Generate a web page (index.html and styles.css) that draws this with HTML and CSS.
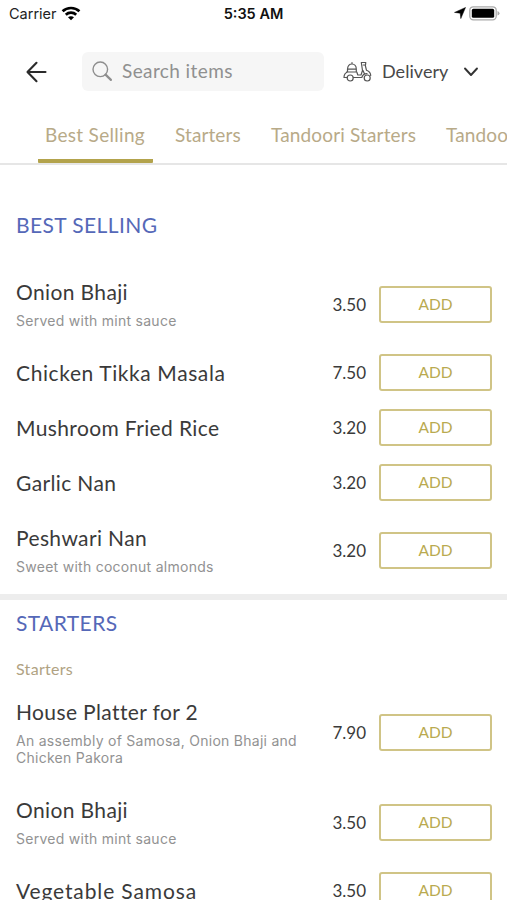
FILE: index.html
```html
<!DOCTYPE html>
<html lang="en">
<head>
<meta charset="utf-8">
<title>Menu</title>
<link rel="stylesheet" href="styles.css">
</head>
<body>
<div class="status">
  <div class="status-left"><span class="carrier">Carrier</span>
    <svg width="20" height="15" viewBox="0 0 20 15" fill="none" stroke="#000" stroke-width="2.7"><path d="M1.6 5.3C6.2.9 13.8.9 18.4 5.3"/><path d="M4.8 8.7C7.7 6 12.3 6 15.2 8.7"/><path d="M10 14.3 7 11.3C8.6 9.8 11.4 9.8 13 11.3Z" fill="#000" stroke="none"/></svg>
  </div>
  <span class="time">5:35 AM</span>
  <div class="status-right">
    <svg width="12" height="12" viewBox="0 0 12 12"><path d="M11.5.5 6.800 11.600 6.200 6.200.5 5.400Z" fill="#000" stroke="#000" stroke-width=".5" stroke-linejoin="round"/></svg>
    <svg width="31" height="15" viewBox="0 0 31 15"><rect x=".8" y=".8" width="26.4" height="13" rx="3.5" fill="#fff" stroke="#aaa" stroke-width="1.3"/><rect x="2.8" y="2.8" width="22.4" height="9" rx="1.6"/><path d="M28.5 5v4.600q2-.7 2-2.300t-2-2.300" fill="#aaa"/></svg>
  </div>
</div>
<header class="header">
  <svg class="back" width="22" height="22" viewBox="0 0 22 22" fill="none" stroke="#2b2b2b" stroke-width="2.1" stroke-linecap="round" stroke-linejoin="round"><path d="M19.500 11H1.800M10.500 1.800 1.500 11l9 9.200"/></svg>
  <div class="search">
    <svg width="21" height="21" viewBox="0 0 21 21" fill="none" stroke="#8e8e8e" stroke-width="1.4"><circle cx="8.300" cy="8.300" r="7.300"/><path d="m13.600 13.600 5.300 5.300" stroke-width="2.200" stroke-linecap="round"/></svg>
    <span>Search items</span>
  </div>
  <div class="mode">
    <svg width="29" height="21" viewBox="0 0 29 21" fill="none" stroke="#555" stroke-width="1.2" stroke-linejoin="round" stroke-linecap="round"><path d="M4.500 8.200C4.700 4.800 6.500 3 9 3s4.300 1.800 4.300 5.200ZM9 3V1.600M4.500 8.200V11M13.300 8.200V11M3.500 11h10.300M4.500 11C2 12 1 14 1 16.500H4M10.400 16.500h8.400c.7-2.500 2.700-3.800 5.200-3.800M13.800 11l1 3h3.200l1.500-4.500-1.200-8h4.500l-.3 2.500h-2.200M22.200 4l1.300 5.300c2.600 1 4.200 3 4.200 5.200M20 9.500l1.500 3.500"/><circle cx="7.200" cy="17" r="3"/><circle cx="24.200" cy="17" r="3"/></svg>
    <span class="mode-label">Delivery</span>
    <svg class="chevron" width="16" height="10" viewBox="0 0 16 10" fill="none" stroke="#333" stroke-width="1.9" stroke-linecap="round" stroke-linejoin="round"><path d="m2 1.500 6 6.500 6-6.500"/></svg>
  </div>
</header>
<nav class="tabs">
  <a class="tab active"><span class="t1">Best Selling</span></a><a class="tab"><span class="t2">Starters</span></a><a class="tab"><span class="t3">Tandoori Starters</span></a><a class="tab"><span class="t3">Tandoori Mains</span></a>
</nav>
<main>
  <section class="best">
    <h2>BEST SELLING</h2>
    <div class="row"><div class="info"><h3>Onion Bhaji</h3><p>Served with mint sauce</p></div><span class="price">3.50</span><button>ADD</button></div>
    <div class="row"><div class="info"><h3 class="wide">Chicken Tikka Masala</h3></div><span class="price">7.50</span><button>ADD</button></div>
    <div class="row"><div class="info"><h3>Mushroom Fried Rice</h3></div><span class="price">3.20</span><button>ADD</button></div>
    <div class="row"><div class="info"><h3>Garlic Nan</h3></div><span class="price">3.20</span><button>ADD</button></div>
    <div class="row"><div class="info"><h3>Peshwari Nan</h3><p>Sweet with coconut almonds</p></div><span class="price">3.20</span><button>ADD</button></div>
  </section>
  <section class="starters">
    <h2>STARTERS</h2>
    <h4>Starters</h4>
    <div class="row"><div class="info"><h3>House Platter for 2</h3><p>An assembly of Samosa, Onion Bhaji and Chicken Pakora</p></div><span class="price">7.90</span><button>ADD</button></div>
    <div class="row"><div class="info"><h3>Onion Bhaji</h3><p>Served with mint sauce</p></div><span class="price">3.50</span><button>ADD</button></div>
    <div class="row"><div class="info"><h3 class="widest">Vegetable Samosa</h3></div><span class="price">3.50</span><button>ADD</button></div>
  </section>
</main>
</body>
</html>
```
FILE: styles.css
```css
* { box-sizing: border-box; margin: 0; padding: 0; }
html, body { height: 900px; overflow: hidden; }
body { width: 507px; background: #fff; color: #3a3a3a; font-family: Lato, sans-serif; }
svg { display: block; flex: none; }

.status { display: grid; grid-template-columns: 1fr auto 1fr; align-items: center; height: 28px; padding: 0 7px 0 9px; font: 14.5px/28px Inter, sans-serif; color: #222; }
.status-left { display: flex; align-items: center; gap: 4px; }
.status-left svg { margin-top: -2px; }
.status-right { display: flex; align-items: center; justify-content: flex-end; gap: 3px; margin-top: -2px; }
.time { margin-left: -2px; font-weight: 600; color: #111; }

.header { display: flex; align-items: center; height: 87px; padding-left: 26px; }
.search { display: flex; align-items: center; gap: 9px; width: 242px; height: 39px; margin-left: 34px; padding: 0 0 1px 10px; border-radius: 6px; background: #f6f6f6; color: #909090; font-size: 19px; letter-spacing: .4px; }
.search span { margin-top: -1px; }
.mode { display: flex; align-items: center; margin-left: 19px; font-size: 18px; color: #484848; }
.mode-label { width: 66px; margin: -2px 0 0 10px; letter-spacing: .05px; white-space: nowrap; }
.chevron { margin-left: 15px; }

.tabs { display: flex; height: 50px; padding-left: 38px; border-bottom: 2px solid #e6e6e6; overflow: hidden; white-space: nowrap; color: #b8aa88; font-size: 19px; line-height: 40px; }
.tab { flex: none; padding: 0 7px; margin-right: 16px; height: 48px; }
.active { margin-right: 15px; border-bottom: 4px solid #b3a34c; border-radius: 1px; }
.t1, .t2, .t3 { display: block; }
.t1 { width: 101px; letter-spacing: .3px; }
.t2 { width: 66px; letter-spacing: .1px; }
.t3 { width: 145px; letter-spacing: .15px; }

h2, h3, h4, p { font-weight: 400; }
h2 { padding: 0 16px; color: #5568b8; font-size: 21px; line-height: 28px; letter-spacing: .4px; }
.best { padding-top: 46px; height: 435px; border-bottom: 6px solid #ededed; }
.best h2 { margin-bottom: 25px; }
.starters { padding-top: 9px; }
h4 { height: 46.500px; padding: 22px 16px 0; color: #b0a283; font-size: 16px; line-height: 20px; letter-spacing: .3px; }
.row { display: flex; align-items: center; padding: 14px 15px 14px 16px; }
.info { width: 294px; margin-right: auto; }
h3 { font-size: 21px; line-height: 27px; letter-spacing: .37px; }
.wide { letter-spacing: .6px; }
.widest { letter-spacing: .87px; }
p { margin: 7.300px 0 1px; color: #929292; font: 14px/17.500px Inter, sans-serif; letter-spacing: .27px; }
.price { width: 48px; margin-right: 13px; text-align: right; font-size: 17px; }
button { flex: none; width: 113px; height: 37px; margin: -5px 0; padding-bottom: 1px; border: 2px solid #d0c486; border-radius: 3px; background: #fff; color: #b9aa50; font: 15.5px Lato, sans-serif; }
```
